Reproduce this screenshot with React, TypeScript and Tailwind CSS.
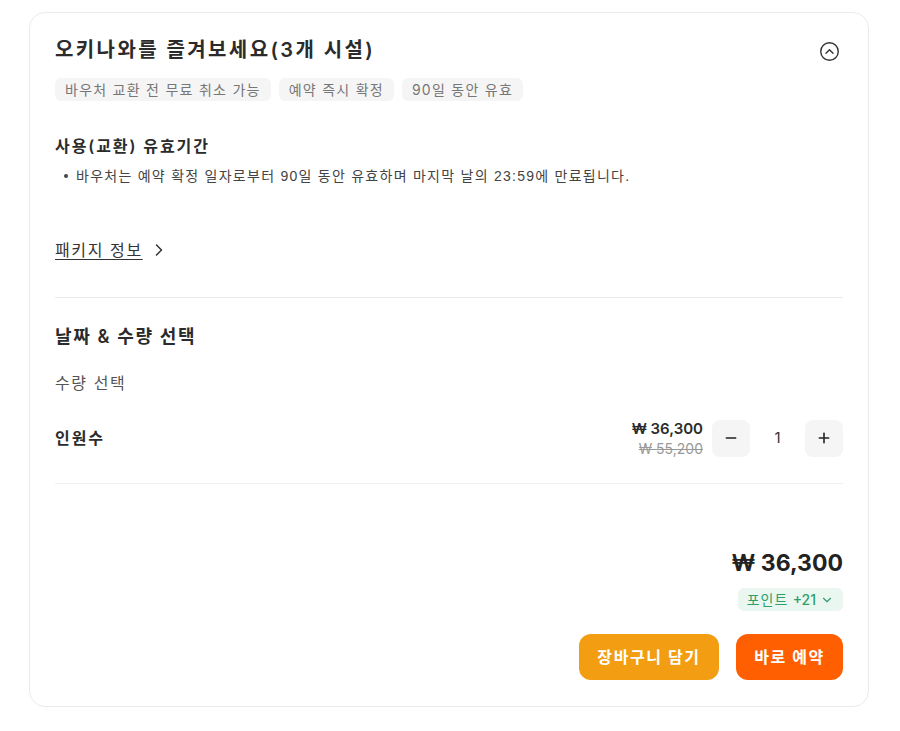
import { CircleChevronUp, ChevronRight, ChevronDown, Minus, Plus } from "lucide-react";

const tags = ["바우처 교환 전 무료 취소 가능", "예약 즉시 확정", "90일 동안 유효"];

export default function App() {
  return (
    <div
      className="min-h-screen bg-white pt-[12px] pl-[29px]"
      style={{ fontFamily: 'Inter, "Noto Sans CJK KR", sans-serif' }}
    >
      <div className="w-[840px] rounded-[16px] border border-[#ebebeb] bg-white px-[25px] pt-[22px] pb-[26px] text-[#333]">
        {/* Header */}
        <div className="flex items-start justify-between">
          <h2 className="text-[20px] font-semibold leading-[30px] tracking-[0.12em] text-[#2b2b2b]">
            오키나와를 즐겨보세요(3개 시설)
          </h2>
          <CircleChevronUp className="mt-[6px] mr-[3px] h-[21px] w-[21px] text-[#333]" strokeWidth={1.6} />
        </div>
        <div className="mt-[13px] flex gap-[8px]">
          {tags.map((t) => (
            <span key={t} className="rounded-[6px] bg-[#f5f5f5] px-[10px] py-[2px] text-[14px] leading-[19px] tracking-[0.09em] text-[#777]">
              {t}
            </span>
          ))}
        </div>

        {/* Validity */}
        <h3 className="mt-[33px] text-[16px] font-semibold leading-[24px] tracking-[0.12em] text-[#2b2b2b]">사용(교환) 유효기간</h3>
        <div className="mt-[8px] flex items-center text-[14px] leading-[20px] text-[#444]">
          <span className="ml-[9px] h-[4px] w-[4px] rounded-full bg-[#444]" />
          <span className="ml-[8px] tracking-[0.09em]" style={{ fontFamily: '"Liberation Sans", "Noto Sans CJK KR", sans-serif' }}>
            바우처는 예약 확정 일자로부터 90일 동안 유효하며 마지막 날의 23:59에 만료됩니다.
          </span>
        </div>

        <div className="mt-[52px] flex items-center gap-[6px]">
          <span className="text-[16px] leading-[24px] tracking-[0.1em] text-[#333] underline underline-offset-[3px]">패키지 정보</span>
          <ChevronRight className="h-[20px] w-[20px] text-[#333]" strokeWidth={1.8} />
        </div>

        <div className="mt-[35px] border-t border-[#ebebeb]" />

        {/* Date & quantity */}
        <h3 className="mt-[26px] text-[18px] font-semibold leading-[26px] tracking-[0.09em] text-[#2b2b2b]">날짜 &amp; 수량 선택</h3>
        <p className="mt-[22px] text-[16px] leading-[22px] tracking-[0.1em] text-[#555]">수량 선택</p>

        <div className="mt-[24px] flex items-center justify-between">
          <span className="text-[16px] font-semibold tracking-[0.12em] text-[#2b2b2b]">인원수</span>
          <div className="flex items-center">
            <div className="flex flex-col items-end">
              <span className="text-[15px] font-semibold leading-[22px] text-[#2b2b2b]">₩ 36,300</span>
              <span className="text-[14px] leading-[18px] text-[#999] line-through">₩ 55,200</span>
            </div>
            <button className="ml-[9px] flex h-[37px] w-[38px] items-center justify-center rounded-[8px] bg-[#f5f5f5]">
              <Minus className="h-[16px] w-[16px] text-[#222]" strokeWidth={2.4} />
            </button>
            <span className="w-[55px] text-center text-[15px] text-[#333]">1</span>
            <button className="flex h-[37px] w-[38px] items-center justify-center rounded-[8px] bg-[#f5f5f5]">
              <Plus className="h-[16px] w-[16px] text-[#222]" strokeWidth={2.4} />
            </button>
          </div>
        </div>

        <div className="mt-[25px] border-t border-[#f0f0f0]" />

        {/* Total */}
        <div className="mt-[63px] flex flex-col items-end">
          <span className="text-[23px] font-bold leading-[32px] text-[#222]">₩ 36,300</span>
          <span className="mt-[9px] flex h-[23px] items-center gap-[4px] rounded-[6px] bg-[#e9f7f0] px-[9px] text-[14px] tracking-[0.08em] text-[#2e9e6b]">
            포인트 <span className="font-medium tracking-normal">+21</span>
            <ChevronDown className="h-[14px] w-[14px]" strokeWidth={2} />
          </span>
          <div className="mt-[23px] flex gap-[17px]">
            <button className="h-[46px] w-[140px] rounded-[12px] bg-[#f29d12] text-[16px] font-bold tracking-[0.1em] text-white">
              장바구니 담기
            </button>
            <button className="h-[46px] w-[107px] rounded-[12px] bg-[#ff5f00] text-[16px] font-bold tracking-[0.1em] text-white">
              바로 예약
            </button>
          </div>
        </div>
      </div>
    </div>
  );
}
